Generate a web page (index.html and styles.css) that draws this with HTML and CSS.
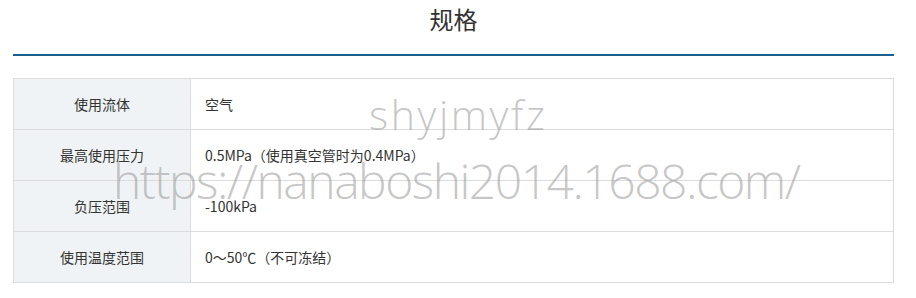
FILE: index.html
```html
<!DOCTYPE html>
<html lang="zh-CN">
<head>
<meta charset="utf-8">
<title>规格</title>
<link rel="stylesheet" href="styles.css">
</head>
<body>
<div class="wrap">
  <h2 class="title">规格</h2>
  <table class="spec">
    <tr><th>使用流体</th><td>空气</td></tr>
    <tr><th>最高使用压力</th><td>0.5MPa（使用真空管时为0.4MPa）</td></tr>
    <tr><th>负压范围</th><td>-100kPa</td></tr>
    <tr><th>使用温度范围</th><td>0～50℃（不可冻结）</td></tr>
  </table>
  <div class="wm wm-1">shyjmyfz</div>
  <div class="wm wm-2">https://nanaboshi2014.1688.com/</div>
</div>
</body>
</html>
```
FILE: styles.css
```css
html, body {
  margin: 0;
  padding: 0;
  background: #fff;
}
.wrap {
  position: relative;
  padding: 0 22px 0 13px;
  font-family: "Noto Sans CJK SC", "Noto Sans", sans-serif;
  color: #333;
}
.title {
  margin: 0;
  padding: 1px 0 17px;
  font-size: 24px;
  line-height: 36px;
  font-weight: 400;
  text-align: center;
  color: #333;
  border-bottom: 2px solid #1b5f8c;
}
.spec {
  margin-top: 22px;
  width: 100%;
  border-collapse: collapse;
  font-size: 14px;
}
.spec th, .spec td {
  border: 1px solid #dcdcdc;
  height: 50px;
  padding: 0;
  font-weight: 400;
  vertical-align: middle;
}
.spec th {
  width: 176px;
  background: #eff3f5;
  text-align: center;
}
.spec td {
  padding-left: 14px;
  text-align: left;
}
.wm {
  position: absolute;
  font-family: "Open Sans", "DejaVu Sans", sans-serif;
  font-weight: 300;
  color: rgba(150, 150, 150, 0.55);
  white-space: nowrap;
  line-height: 1;
  pointer-events: none;
}
.wm-1 {
  left: 369px;
  top: 94px;
  font-size: 41px;
  letter-spacing: 2.6px;
}
.wm-2 {
  left: 113px;
  top: 157px;
  font-size: 48px;
  letter-spacing: -1.5px;
}
```
